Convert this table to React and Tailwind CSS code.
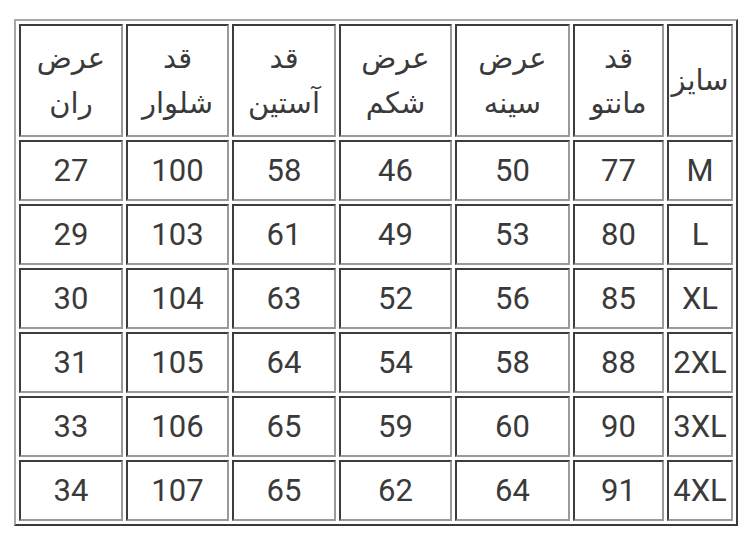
import React from "react";

const widths = ["w-[66px]", "w-[91px]", "w-[115px]", "w-[113px]", "w-[104px]", "w-[103px]", "w-[104px]"];

const header = [
  ["سایز"],
  ["قد", "مانتو"],
  ["عرض", "سینه"],
  ["عرض", "شکم"],
  ["قد", "آستین"],
  ["قد", "شلوار"],
  ["عرض", "ران"],
];

const rows = [
  ["M", 77, 50, 46, 58, 100, 27],
  ["L", 80, 53, 49, 61, 103, 29],
  ["XL", 85, 56, 52, 63, 104, 30],
  ["2XL", 88, 58, 54, 64, 105, 31],
  ["3XL", 90, 60, 59, 65, 106, 33],
  ["4XL", 91, 64, 62, 65, 107, 34],
];

const cellBorder =
  "border-2 border-t-[#3c3c3c] border-r-[#9a9a9a] border-b-[#9a9a9a] border-l-[#3c3c3c]";

export default function App() {
  return (
    <div className="w-[750px] h-[548px] bg-white pt-[19px] pl-[14px]" style={{ fontFamily: "Roboto, 'DejaVu Sans', sans-serif" }}>
      <table
        dir="rtl"
        className="table-fixed border-separate border-spacing-[3px] border-2 border-t-[#a8a8a8] border-l-[#a8a8a8] border-r-[#3a3a3a] border-b-[#3a3a3a] text-[#3a3a3a]"
      >
        <tbody>
          <tr>
            {header.map((h, i) => (
              <td
                key={i}
                className={`${widths[i]} h-[113px] ${cellBorder} text-center align-middle p-0`}
              >
                {h.map((t, j) => (
                  <div key={j} className="text-[29px] leading-[45px]" style={{ fontFamily: "'DejaVu Sans', sans-serif" }}>
                    {t}
                  </div>
                ))}
              </td>
            ))}
          </tr>
          {rows.map((r, ri) => (
            <tr key={ri}>
              {r.map((v, i) => (
                <td
                  key={i}
                  dir="ltr"
                  className={`${widths[i]} h-[61px] ${cellBorder} text-center align-middle p-0 text-[31px] leading-none whitespace-nowrap`}
                >
                  {v}
                </td>
              ))}
            </tr>
          ))}
        </tbody>
      </table>
    </div>
  );
}
